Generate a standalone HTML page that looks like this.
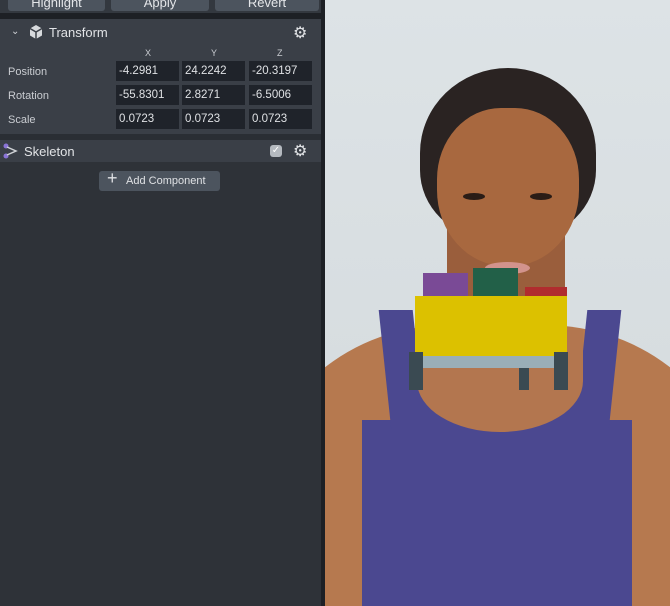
<!DOCTYPE html>
<html style="overflow:hidden"><head><style>
*{margin:0;padding:0;box-sizing:border-box}
html,body{width:670px;height:606px;overflow:hidden}
body{background:#2e3238;font-family:"Liberation Sans",sans-serif;position:relative}
.a{position:absolute}
.btn{position:absolute;top:-4px;height:15px;background:#4c545e;border-radius:3px;color:#e4e6e9;font-size:13px;text-align:center;line-height:13px}
.lbl{position:absolute;left:8px;color:#c9ccd1;font-size:11px}
.in{position:absolute;width:63px;height:20px;background:#1f232a;color:#dfe1e4;font-size:11.5px;line-height:20px;padding-left:3px}
.ax{position:absolute;top:48px;color:#c9ccd1;font-size:9px}
</style></head><body>
<div class="a" style="left:0;top:0;width:321px;height:14px;background:#33383f"></div>
<div class="btn" style="left:8px;width:97px">Highlight</div>
<div class="btn" style="left:111px;width:98px">Apply</div>
<div class="btn" style="left:215px;width:104px">Revert</div>
<div class="a" style="left:0;top:13px;width:321px;height:6px;background:#1d2025"></div>
<div class="a" style="left:0;top:19px;width:321px;height:115px;background:#3a3f47"></div>
<div class="a" style="left:11px;top:26px;color:#d0d3d7;font-size:10px">&#8964;</div>
<svg class="a" style="left:28px;top:24px" width="16" height="16" viewBox="0 0 16 16"><path d="M8 1 L14 4.5 L14 11.5 L8 15 L2 11.5 L2 4.5Z" fill="#d7dadd"/><path d="M8 8 L8 15 M8 8 L2 4.5 M8 8 L14 4.5" stroke="#3a3f47" stroke-width="1.5"/></svg>
<div class="a" style="left:49px;top:25px;color:#e1e3e6;font-size:13px">Transform</div>
<div class="a" style="left:293px;top:23px;color:#e1e3e6;font-size:16px">&#9881;</div>
<div class="ax" style="left:145px">X</div><div class="ax" style="left:211px">Y</div><div class="ax" style="left:277px">Z</div>
<div class="lbl" style="top:66px">Position</div>
<div class="lbl" style="top:90px">Rotation</div>
<div class="lbl" style="top:114px">Scale</div>
<div class="in" style="left:116px;top:61px">-4.2981</div><div class="in" style="left:182px;top:61px">24.2242</div><div class="in" style="left:249px;top:61px">-20.3197</div>
<div class="in" style="left:116px;top:85px">-55.8301</div><div class="in" style="left:182px;top:85px">2.8271</div><div class="in" style="left:249px;top:85px">-6.5006</div>
<div class="in" style="left:116px;top:109px">0.0723</div><div class="in" style="left:182px;top:109px">0.0723</div><div class="in" style="left:249px;top:109px">0.0723</div>
<div class="a" style="left:0;top:134px;width:321px;height:6px;background:#2a2e34"></div>
<div class="a" style="left:0;top:140px;width:321px;height:22px;background:#3a3f47"></div>
<svg class="a" style="left:3px;top:143px" width="18" height="16" viewBox="0 0 18 16"><circle cx="3" cy="3" r="2.5" fill="#8a74d6"/><circle cx="3" cy="13" r="2.5" fill="#8a74d6"/><path d="M4 4 L13 8 L4 12" stroke="#d0d3d7" stroke-width="1.5" fill="none"/></svg>
<div class="a" style="left:24px;top:144px;color:#e1e3e6;font-size:13px">Skeleton</div>
<div class="a" style="left:270px;top:145px;width:12px;height:12px;background:#b4b9bf;border-radius:3px;color:#fff;font-size:10px;line-height:12px;text-align:center">&#10003;</div>
<div class="a" style="left:293px;top:141px;color:#e1e3e6;font-size:16px">&#9881;</div>
<div class="a" style="left:99px;top:171px;width:121px;height:20px;background:#4c545e;border-radius:3px;color:#dfe1e4;font-size:11px;line-height:20px;padding-left:27px">Add Component</div>
<div class="a" style="left:107px;top:168px;color:#dfe1e4;font-size:18px">+</div>
<div class="a" style="left:321px;top:0;width:4px;height:606px;background:#1d2025"></div>
<div class="a" style="left:325px;top:0;width:345px;height:606px;background:linear-gradient(#dde3e6,#d3d9dc);overflow:hidden">
 <div class="a" style="left:-60px;top:325px;width:465px;height:400px;background:#b6794f;border-radius:40% 40% 0 0"></div>
 <div class="a" style="left:122px;top:210px;width:118px;height:150px;background:#9a5e3c"></div>
 <div class="a" style="left:95px;top:68px;width:176px;height:170px;background:#2a2322;border-radius:50% 50% 40% 40%"></div>
 <div class="a" style="left:112px;top:108px;width:142px;height:158px;background:#a8683f;border-radius:45% 45% 48% 48%"></div>
 <div class="a" style="left:138px;top:193px;width:22px;height:7px;background:#2a1c16;border-radius:50%"></div>
 <div class="a" style="left:205px;top:193px;width:22px;height:7px;background:#2a1c16;border-radius:50%"></div>
 <div class="a" style="left:160px;top:262px;width:45px;height:12px;background:#d2938c;border-radius:50%"></div>
 <div class="a" style="left:37px;top:420px;width:270px;height:190px;background:#4b4890"></div>
 <div class="a" style="left:60px;top:310px;width:34px;height:120px;background:#4b4890;transform:skewX(6deg)"></div>
 <div class="a" style="left:256px;top:310px;width:34px;height:120px;background:#4b4890;transform:skewX(-6deg)"></div>
 <div class="a" style="left:70px;top:390px;width:210px;height:45px;background:#4b4890"></div>
 <div class="a" style="left:92px;top:330px;width:166px;height:102px;background:#b3764f;border-radius:0 0 50% 50%"></div>
 <div class="a" style="left:98px;top:273px;width:45px;height:25px;background:#7a4a96"></div>
 <div class="a" style="left:148px;top:268px;width:45px;height:30px;background:#226048"></div>
 <div class="a" style="left:200px;top:287px;width:42px;height:15px;background:#b02c2e"></div>
 <div class="a" style="left:90px;top:296px;width:152px;height:62px;background:#dcc100"></div>
 <div class="a" style="left:88px;top:356px;width:155px;height:12px;background:#9aaeb7"></div>
 <div class="a" style="left:84px;top:352px;width:14px;height:38px;background:#3a4a52"></div>
 <div class="a" style="left:229px;top:352px;width:14px;height:38px;background:#3a4a52"></div>
 <div class="a" style="left:194px;top:368px;width:10px;height:22px;background:#3a4a52"></div>
</div>
</body></html>
